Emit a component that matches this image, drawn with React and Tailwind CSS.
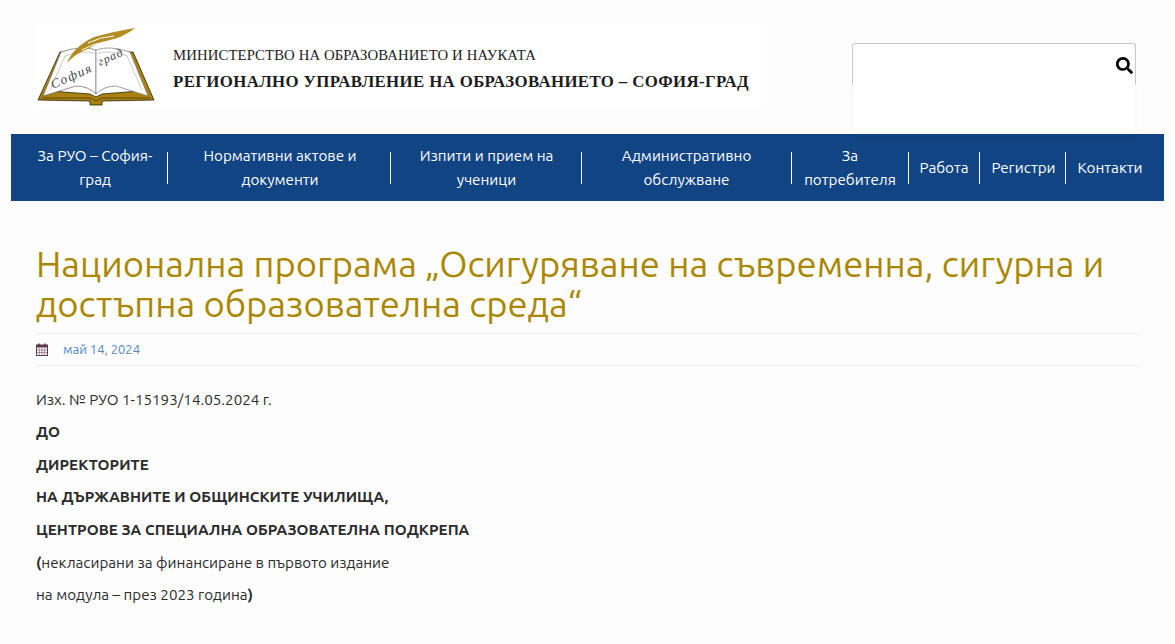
import React from "react";
import { FaSearch } from "react-icons/fa";

const nav = [
  ["За РУО – София-град", "w-[157px] pl-[26px] pr-[14px]", true],
  ["Нормативни актове и документи", "w-[223px] pl-[26px] pr-[24px]", true],
  ["Изпити и прием на ученици", "w-[191px] pl-[20px] pr-[19px]", true],
  ["Административно обслужване", "w-[210px] px-[30px]", true],
  ["За потребителя", "w-[117px] px-[10px]", true],
  ["Работа", "w-[71px] px-[6px]", true],
  ["Регистри", "w-[86px] pl-[7px] pr-[5px]", true],
  ["Контакти", "w-[98px] pr-[10px]", false],
];

function Logo() {
  return (
    <svg width="124" height="84" viewBox="0 0 124 84" className="shrink-0">
      <path d="M2 76 L24 28 L29 28 L14 67 L54 70 L60 73 L66 70 L104 67 L90 28 L97 28 L118 76 L66 77 L66 81 L54 81 L54 77 Z" fill="#ab8212" stroke="#2a2208" strokeWidth="0.8" />
      <path d="M6 74 L54 74 L60 77 L66 74 L114 74" fill="none" stroke="#2a2208" strokeWidth="0.6" />
      <path d="M7 72 L25 28 Q46 21 60 26 L60 70 Q52 62 40 62 L7 72 Z" fill="#fff" stroke="#666" strokeWidth="0.7" />
      <path d="M112 72 L94 28 Q74 21 60 26 L60 70 Q68 62 80 62 L112 72 Z" fill="#fff" stroke="#777" strokeWidth="0.7" />
      <path d="M14 66 L29 32 Q46 26 58 29 M106 66 L91 32 Q74 26 62 29" fill="none" stroke="#999" strokeWidth="0.5" />
      <path d="M31 39 Q37 23 58 13 Q80 7 99 4 Q88 13 74 16 Q60 19 52 25 Q40 29 31 39 Z" fill="#b38c22" />
      <path d="M52 19 Q64 13 78 12 M46 26 Q56 20 68 18" stroke="#fff" strokeWidth="1" fill="none" />
      <text x="17" y="65" transform="rotate(-24 17 65)" fontFamily="'Liberation Serif', serif" fontStyle="italic" fontSize="13" letterSpacing="1.5" fill="#444">София</text>
      <text x="64" y="42" transform="rotate(-24 64 42)" fontFamily="'Liberation Serif', serif" fontStyle="italic" fontSize="12" letterSpacing="1" fill="#444">град</text>
    </svg>
  );
}

function CalendarIcon() {
  return (
    <svg width="12" height="13" viewBox="0 0 12 13" className="shrink-0" fill="none">
      <rect x="0.5" y="2" width="11" height="10.5" fill="#fff" stroke="#5a3a4c" />
      <rect x="0.5" y="2" width="11" height="2.5" fill="#5a3a4c" />
      <path d="M3 0.5V3M9 0.5V3" stroke="#5a3a4c" strokeWidth="1.6" />
      <path d="M3.3 4.5V12M6 4.5V12M8.7 4.5V12M1 7H11M1 9.6H11" stroke="#8a7480" strokeWidth="0.8" />
    </svg>
  );
}

export default function App() {
  return (
    <div className="min-h-[644px] bg-[#fdfdfd] px-[11px] font-['Ubuntu','Noto_Sans',sans-serif] text-[#2b2b2b]">
      <header className="flex h-[134px] items-start pl-[25px]">
        <div className="mt-[24px] flex h-[84px] w-[725px] items-center bg-white">
          <Logo />
          <div className="ml-[13px] flex flex-col pt-[4px] font-['Liberation_Serif',serif] text-[#1c1c1c]">
            <span className="text-[14.75px] leading-[20px] tracking-[0.1px]">МИНИСТЕРСТВО НА ОБРАЗОВАНИЕТО И НАУКАТА</span>
            <span className="mt-[7px] text-[16.85px] font-bold leading-[20px] tracking-[0.35px]">РЕГИОНАЛНО УПРАВЛЕНИЕ НА ОБРАЗОВАНИЕТО – СОФИЯ-ГРАД</span>
          </div>
        </div>
        <div className="ml-[91px] mt-[43px] w-[284px]">
          <div className="flex h-[42px] items-center justify-end rounded-t-[3px] border border-b-0 border-[#c8c8c8] bg-white pr-[2px] pt-[1px] text-[17px] text-black">
            <FaSearch />
          </div>
          <div className="mx-[1px] h-[49px] bg-white shadow-[0_2px_5px_rgba(0,0,0,0.05)]" />
        </div>
      </header>

      <nav className="flex h-[67px] items-center bg-[#114483] text-white">
        {nav.map(([label, cls, sep]) => (
          <div key={label} className={`flex h-[32px] shrink-0 items-center justify-center text-center text-[15.2px] leading-[24px] ${cls} ${sep ? "border-r border-white" : ""}`}>
            <a className="block">{label}</a>
          </div>
        ))}
      </nav>

      <main className="px-[25px] pt-[43px]">
        <h1 className="text-[36.4px] font-normal leading-[40px] text-[#ab8700]">
          Национална програма „Осигуряване на съвременна, сигурна и достъпна образователна среда“
        </h1>
        <div className="mt-[9px] flex h-[33px] items-center border-y border-[#eeeeee] text-[13px] text-[#4f88c9]">
          <CalendarIcon />
          <span className="ml-[15px]">май 14, 2024</span>
        </div>
        <div className="mt-[17.6px] text-[15.2px] leading-[32.6px]">
          <p>Изх. № РУО 1-15193/14.05.2024 г.</p>
          <p className="font-bold tracking-[0.05px]">ДО</p>
          <p className="font-bold tracking-[0.05px]">ДИРЕКТОРИТЕ</p>
          <p className="font-bold tracking-[0.05px]">НА ДЪРЖАВНИТЕ И ОБЩИНСКИТЕ УЧИЛИЩА,</p>
          <p className="font-bold tracking-[0.05px]">ЦЕНТРОВЕ ЗА СПЕЦИАЛНА ОБРАЗОВАТЕЛНА ПОДКРЕПА</p>
          <p><b>(</b>некласирани за финансиране в първото издание</p>
          <p>на модула – през 2023 година<b>)</b></p>
        </div>
      </main>
    </div>
  );
}
